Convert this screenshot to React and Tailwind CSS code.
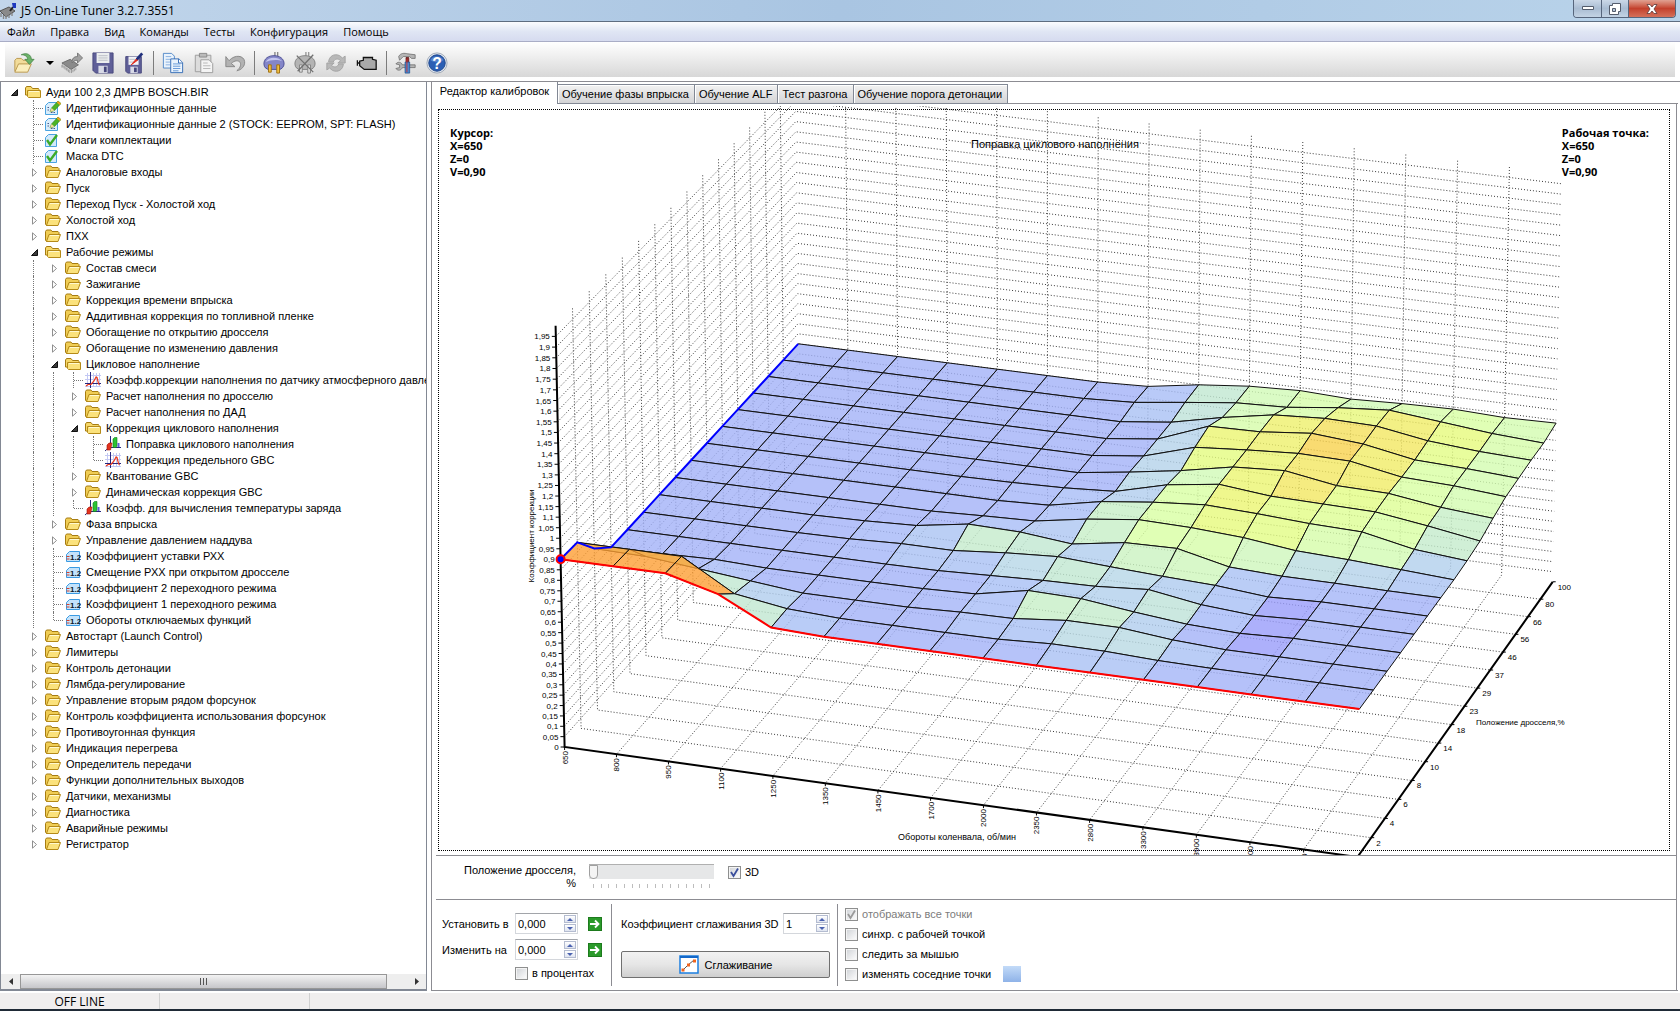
import React, { useState } from 'react';

const MENU = ['Файл', 'Правка', 'Вид', 'Команды', 'Тесты', 'Конфигурация', 'Помощь'];
const TABS = ['Редактор калибровок', 'Обучение фазы впрыска', 'Обучение ALF', 'Тест разгона', 'Обучение порога детонации'];

const TREE = {
    label: 'Ауди 100 2,3 ДМРВ BOSCH.BIR', icon: 'open', children: [
        { label: 'Идентификационные данные', icon: 'edit' },
        { label: 'Идентификационные данные 2 (STOCK: EEPROM, SPT: FLASH)', icon: 'edit' },
        { label: 'Флаги комплектации', icon: 'check' },
        { label: 'Маска DTC', icon: 'check' },
        { label: 'Аналоговые входы', icon: 'folder' },
        { label: 'Пуск', icon: 'folder' },
        { label: 'Переход Пуск - Холостой ход', icon: 'folder' },
        { label: 'Холостой ход', icon: 'folder' },
        { label: 'ПХХ', icon: 'folder' },
        {
            label: 'Рабочие режимы', icon: 'open', children: [
                { label: 'Состав смеси', icon: 'folder' },
                { label: 'Зажигание', icon: 'folder' },
                { label: 'Коррекция времени впрыска', icon: 'folder' },
                { label: 'Аддитивная коррекция по топливной пленке', icon: 'folder' },
                { label: 'Обогащение по открытию дросселя', icon: 'folder' },
                { label: 'Обогащение по изменению давления', icon: 'folder' },
                {
                    label: 'Цикловое наполнение', icon: 'open', children: [
                        { label: 'Коэфф.коррекции наполнения по датчику атмосферного давления', icon: 'curve' },
                        { label: 'Расчет наполнения по дросселю', icon: 'folder' },
                        { label: 'Расчет наполнения по ДАД', icon: 'folder' },
                        {
                            label: 'Коррекция циклового наполнения', icon: 'open', children: [
                                { label: 'Поправка циклового наполнения', icon: 'bars' },
                                { label: 'Коррекция предельного GBC', icon: 'curve' },
                            ],
                        },
                        { label: 'Квантование GBC', icon: 'folder' },
                        { label: 'Динамическая коррекция GBC', icon: 'folder' },
                        { label: 'Коэфф. для вычисления температуры заряда', icon: 'bars' },
                    ],
                },
                { label: 'Фаза впрыска', icon: 'folder' },
                { label: 'Управление давлением наддува', icon: 'folder' },
                { label: 'Коэффициент уставки РХХ', icon: 'value' },
                { label: 'Смещение РХХ при открытом дросселе', icon: 'value' },
                { label: 'Коэффициент 2 переходного режима', icon: 'value' },
                { label: 'Коэффициент 1 переходного режима', icon: 'value' },
                { label: 'Обороты отключаемых функций', icon: 'value' },
            ],
        },
        { label: 'Автостарт (Launch Control)', icon: 'folder' },
        { label: 'Лимитеры', icon: 'folder' },
        { label: 'Контроль детонации', icon: 'folder' },
        { label: 'Лямбда-регулирование', icon: 'folder' },
        { label: 'Управление вторым рядом форсунок', icon: 'folder' },
        { label: 'Контроль коэффициента использования форсунок', icon: 'folder' },
        { label: 'Противоугонная функция', icon: 'folder' },
        { label: 'Индикация перегрева', icon: 'folder' },
        { label: 'Определитель передачи', icon: 'folder' },
        { label: 'Функции дополнительных выходов', icon: 'folder' },
        { label: 'Датчики, механизмы', icon: 'folder' },
        { label: 'Диагностика', icon: 'folder' },
        { label: 'Аварийные режимы', icon: 'folder' },
        { label: 'Регистратор', icon: 'folder' },
    ],
};

/* ---------- Tree icons ---------- */

function NodeIcon({ type }) {
    if (type === 'folder') {
        return (
            <svg width="16" height="16" viewBox="0 0 16 16">
                <path d="M.5 12V3.500l1-1.500H6l1 1.500h6l1 1V7l-2.500 6.500h-10z" fill="#f0cd55" stroke="#a67c12" />
                <path d="M4 6.500h11.500l-2.500 7H1.500z" fill="#fbe27c" stroke="#b58a18" />
                <path d="M5 7.500h9" stroke="#fff9d0" />
            </svg>
        );
    }
    if (type === 'open') {
        return (
            <svg width="16" height="16" viewBox="0 0 16 16">
                <path d="M.5 11V4l1-1.500h4.500l1.500 2h6l.5 1V12z" fill="#f6d768" stroke="#a67c12" />
                <path d="M2.500 6.500h13v7h-12l-1-1z" fill="#fbe27c" stroke="#b58a18" />
                <path d="M4 7.500h10" stroke="#fff9d0" />
            </svg>
        );
    }
    if (type === 'edit') {
        return (
            <svg width="16" height="16" viewBox="0 0 16 16">
                <path d="M3.500 2.500h9v12H.5v-9z" fill="#d8edfc" stroke="#4aa3e0" />
                <path d="M2.500 7.500h2M2.500 10h2M6 12.500h4" stroke="#4a5a8a" strokeDasharray="1.500 1" />
                <path d="M5 12l1.500-4L13 1l3 2.500-6.500 7z" fill="#4bb324" stroke="#2b7d12" strokeWidth=".6" />
                <path d="M5 12l1.500-4 3 2.500z" fill="#f2d79a" />
                <path d="M13 1l3 2.500-1.300 1.400-3-2.500z" fill="#f0a020" />
            </svg>
        );
    }
    if (type === 'check') {
        return (
            <svg width="16" height="16" viewBox="0 0 16 16">
                <path d="M3.500 2.500h8v12H.5v-9z" fill="#d3e9fb" stroke="#4aa3e0" />
                <path d="M2 8l3 4.500L12 3" fill="none" stroke="#3cab28" strokeWidth="2.400" />
            </svg>
        );
    }
    if (type === 'curve') {
        return (
            <svg width="16" height="16" viewBox="0 0 16 16">
                <path d="M0 3.500h16M0 7.500h16M0 14.500h16M2.500 1v14M8.500 1v14M11.500 1v14M14.500 1v14" stroke="#c3c8f4" />
                <path d="M0 11.500h16M5.500 0v16" stroke="#27277d" />
                <path d="M1 14l2-1.500h3L9 9l2-4 1 .5 1.500 6 1 1.500" fill="none" stroke="#ee3a1c" strokeWidth="1.200" />
            </svg>
        );
    }
    if (type === 'bars') {
        return (
            <svg width="16" height="16" viewBox="0 0 16 16">
                <path d="M5.500 0v11M0 15l4-3.500h12" fill="none" stroke="#27277d" />
                <path d="M2 9l2-2h3l-1.500 7H2z" fill="#e2331f" stroke="#a31408" strokeWidth=".6" />
                <path d="M8 3l1.500-1.500H12V10l-1 1.500H8z" fill="#2cc433" stroke="#127a18" strokeWidth=".6" />
                <path d="M12.500 7h2v4h-2z" fill="#5a62d8" />
            </svg>
        );
    }
    return (
        <svg width="16" height="16" viewBox="0 0 16 16">
            <path d="M4.500 3.500h10v10H1.500v-7z" fill="#c4e3fb" stroke="#3b9be2" />
            <path d="M1.500 8.500h3M1.500 11h3" stroke="#d8402c" />
            <text x="5" y="12" fontSize="8" fontWeight="700" fill="#10182a" fontFamily="Liberation Sans, sans-serif">1.2</text>
        </svg>
    );
}

function Expander({ open }) {
    return (
        <button type="button" aria-label={open ? 'Свернуть' : 'Развернуть'} className="flex h-4 w-5 items-center justify-center pl-[2px]">
            <svg width="8" height="9" viewBox="0 0 8 9">
                {open
                    ? <path d="M6.500 1.500v6h-6z" fill="#3a3a3a" stroke="#111" />
                    : <path d="M1.500 .8v7.400l4-3.700z" fill="#fff" stroke="#8f8f8f" />}
            </svg>
        </button>
    );
}

/* guides holds, for every ancestor, whether its vertical dotted line goes on */
function TreeRow({ node, guides, last, root }) {
    const folder = node.icon === 'folder' || node.icon === 'open';
    return (
        <>
            <li className="flex h-4 items-center whitespace-nowrap">
                {guides.map((on, i) => (
                    <span key={i} className="flex h-4 w-5 shrink-0 pl-[9px]">
                        {on && <span className="h-4 border-l border-dotted border-[#777]" />}
                    </span>
                ))}
                {folder ? <Expander open={node.icon === 'open'} /> : (
                    <span className="flex h-4 w-5 shrink-0 items-start pl-[9px]">
                        <span className={`border-l border-dotted border-[#777] ${last ? 'h-2' : 'h-4'}`} />
                        <span className="mt-2 w-[9px] border-t border-dotted border-[#777]" />
                    </span>
                )}
                <span className="mr-[5px] ml-px shrink-0"><NodeIcon type={node.icon} /></span>
                <span>{node.label}</span>
            </li>
            {node.children && node.children.map((child, i) => (
                <TreeRow
                    key={child.label}
                    node={child}
                    guides={root ? [false] : [...guides, !last]}
                    last={i === node.children.length - 1}
                />
            ))}
        </>
    );
}

/* ---------- Toolbar icons ---------- */

const TOOL_ICONS = {
    open: (
        <>
            <path d="M2 21V9l2-2h5l2 2h7v4" fill="#f2dc9a" stroke="#b8954a" />
            <path d="M2 22l4-9h14l-4 9z" fill="#fbeebc" stroke="#b8954a" />
            <path d="M9 3c6-3 11 0 11 5h3l-5 5.500L13 8h3c0-3-3-5-7-5z" fill="#6cb26a" stroke="#3f7f3f" strokeWidth=".8" />
        </>
    ),
    chip: (
        <>
            <path d="M1 12l9-4 9 6-8 5z" fill="#8a8a8a" stroke="#6a6a6a" />
            <path d="M2 13v4M4.500 15v4M7 17v4M9.500 19v4M13 19v3M16 17v3" stroke="#b5b5b5" strokeWidth="1.600" />
            <path d="M1 14v3M3.300 15v3M5.800 17v3M8.300 19v3M11.500 19v4M14.500 18v3" stroke="#777" strokeWidth=".7" />
            <path d="M12 12c0-5 2-7 6-7V1l5.500 5.500L18 12V9c-3 0-4 1-6 3z" fill="#a2a2a2" stroke="#757575" />
        </>
    ),
    save: (
        <>
            <path d="M1 1h22v22H4l-3-3z" fill="#5f5f98" stroke="#46477c" />
            <path d="M5 1h14v11H5z" fill="#eceeef" />
            <path d="M7 4h10M7 6.500h10M7 9h10" stroke="#b9bcc4" />
            <path d="M7 15h10v8H7z" fill="#d8dae6" />
            <path d="M13 16h3v6h-3z" fill="#46477c" />
        </>
    ),
    saveEdit: (
        <>
            <path d="M3 5h17v18H5l-2-2z" fill="#5f5f98" stroke="#46477c" />
            <path d="M6 5h11v9H6z" fill="#f4f5f7" />
            <path d="M7 8h6M7 11h5" stroke="#b9bcc4" />
            <path d="M8 16h8v7H8z" fill="#d8dae6" />
            <path d="M12 17h3v5h-3z" fill="#46477c" />
            <path d="M9 14l6-7 1.500 1.500z" fill="#e02818" stroke="#e02818" />
            <path d="M15 8l6-6.500" stroke="#20307c" strokeWidth="3" />
        </>
    ),
    copy: (
        <>
            <path d="M1.500 1.500h9l3 3v13h-12z" fill="#eaf3fc" stroke="#4f86c6" />
            <path d="M4 5h6M4 8h5M4 11h5M4 14h5" stroke="#85aede" />
            <path d="M9.500 7.500h9l4 4v11h-13z" fill="#eaf3fc" stroke="#2f68b4" />
            <path d="M18 7.500v4.500h4.500" fill="#fff" stroke="#2f68b4" />
            <path d="M12 13h8M12 15.500h8M12 18h8M12 20.500h6" stroke="#5f94d4" />
        </>
    ),
    paste: (
        <>
            <path d="M2.500 3.500h17v18h-17z" fill="#dcdcdc" stroke="#999" />
            <path d="M7 1.500h8v4H7z" fill="#bbb" stroke="#888" />
            <path d="M8.500 8.500h9l4 4v10h-13z" fill="#f4f4f4" stroke="#999" />
            <path d="M11 12h5M11 15h8M11 18h8" stroke="#b4b4b4" />
        </>
    ),
    undo: <path d="M2 5v11h10l-4-3.500c5-5 11-3 10 2-.5 3-2 4-4 6 5-1 9-5 8.500-10C22 4 12 2 5.500 9.500z" fill="#b2b2b2" stroke="#868686" />,
    plug: (
        <>
            <path d="M13 0v6M16 0v6" stroke="#888" strokeWidth="1.500" />
            <path d="M1 13C1 7 6 4 12 4s11 3 11 9c0 3-3 6-5 6H7c-3 0-6-2-6-6z" fill="#8486c8" stroke="#4c4e94" />
            <path d="M3 11c3-6 13-6 18-1-4-2-13-2-18 1z" fill="#c4c6f0" />
            <path d="M6 14v8h3v-8zM15 14v9h3v-9z" fill="#f0c040" stroke="#9c6c10" />
        </>
    ),
    unplug: (
        <>
            <path d="M13 0v6M16 0v6" stroke="#999" strokeWidth="1.500" />
            <path d="M1 13C1 7 6 4 12 4s11 3 11 9c0 3-3 6-5 6H7c-3 0-6-2-6-6z" fill="#b4b4b4" stroke="#808080" />
            <path d="M6 14v8h3v-8zM15 14v9h3v-9z" fill="#ddd" stroke="#808080" />
            <path d="M3 4l18 18M21 3L4 21" stroke="#707070" strokeWidth="1.400" />
        </>
    ),
    refresh: (
        <>
            <path d="M4 11C4 5 10 1 16 4l3 2.500 3-2V12h-8l3-2.500c-3-3-7-2-8 1.500z" fill="#b8b8b8" stroke="#a2a2a2" />
            <path d="M20 13c0 6-6 10-12 7l-3-2.500-3 2V12h8l-3 2.500c3 3 7 2 8-1.500z" fill="#b8b8b8" stroke="#a2a2a2" />
        </>
    ),
    engine: <path d="M4 10l4-1V6h10v2l4 1v10H9l-5-4zM4 12H1.500M1.500 9v6" fill="#a9a9a9" stroke="#111" strokeWidth="1.400" />,
    tools: (
        <>
            <path d="M4 5c2-4 6-4 10-3l8 1v4h-4l-2-2H9L5 9z" fill="#b5b5b5" stroke="#666" strokeWidth=".8" />
            <path d="M12 6h3v6h-3z" fill="#8c2a2a" stroke="#5c1010" strokeWidth=".8" />
            <path d="M1 13l4 1v3l-4 1c2 3 6 2 7-1h14v-3H8c-1-3-5-4-7-1z" fill="#b5b5b5" stroke="#666" strokeWidth=".8" />
            <path d="M11 11h5v12h-5z" fill="#4a86cc" stroke="#1f4e8c" strokeWidth=".8" />
            <path d="M13 8v14" stroke="#d03030" />
        </>
    ),
    help: (
        <>
            <circle cx="12" cy="12" r="11" fill="#e8edf4" stroke="#9aa4b4" />
            <circle cx="12" cy="12" r="9" fill="#2c5fb4" stroke="#1d4488" />
            <path d="M5 9c1-5 12-6 14 0-4 3-10 3-14 0z" fill="#6e9ade" opacity=".6" />
            <text x="12" y="18" fontSize="17" fontWeight="700" fill="#fff" textAnchor="middle" fontFamily="Liberation Sans, sans-serif">?</text>
        </>
    ),
};

const TOOLS = [
    ['open', 'Открыть'], ['drop', 'Последние файлы'], ['chip', 'Прочитать'], ['save', 'Сохранить'], ['saveEdit', 'Сохранить как'], ['sep1'],
    ['copy', 'Копировать'], ['paste', 'Вставить'], ['undo', 'Отменить'], ['sep2'],
    ['plug', 'Соединить'], ['unplug', 'Разъединить'], ['refresh', 'Обновить'], ['engine', 'Двигатель'], ['sep3'],
    ['tools', 'Настройки'], ['help', 'Справка'],
];

function Toolbar() {
    return (
        <div className="h-10 shrink-0 border-b border-[#8c8c92] bg-white px-[5px] pb-1">
            <div className="flex h-[35px] items-center bg-linear-to-b from-white to-[#d8d8d8] pt-[6px] pl-[3px]">
                {TOOLS.map(([id, title]) => {
                    if (id.startsWith('sep')) return <span key={id} className="flex w-2 justify-center"><span className="h-6 w-px bg-[#7c7c7c]" /></span>;
                    if (id === 'drop') {
                        return (
                            <button key={id} type="button" aria-label={title} className="flex w-[17px] justify-center pl-1">
                                <svg width="8" height="4" viewBox="0 0 8 4"><path d="M0 0h8L4 4z" /></svg>
                            </button>
                        );
                    }
                    return (
                        <button key={id} type="button" aria-label={title} className="flex w-[31px] justify-center">
                            <svg width="22" height="22" viewBox="0 0 24 24" fill="none">{TOOL_ICONS[id]}</svg>
                        </button>
                    );
                })}
            </div>
        </div>
    );
}

/* ---------- 3D chart ---------- */

const RPM = ['650', '800', '950', '1100', '1250', '1350', '1450', '1700', '2000', '2350', '2800', '3300', '3900', '4500', '5200'];
const THROTTLE = ['2', '4', '6', '8', '10', '14', '18', '23', '29', '37', '46', '56', '66', '80', '100'];

// rows: throttle 0..100 %, columns: rpm
const VALUES = [
    [0.9, 0.9, 0.9, 0.835, 0.71, 0.7, 0.7, 0.7, 0.7, 0.7, 0.7, 0.7, 0.7, 0.7, 0.7, 0.7],
    [0.895, 0.895, 0.895, 0.75, 0.712, 0.7, 0.7, 0.7, 0.702, 0.714, 0.713, 0.703, 0.7, 0.7, 0.7, 0.7],
    [0.78, 0.775, 0.75, 0.725, 0.7, 0.7, 0.7, 0.71, 0.713, 0.738, 0.738, 0.713, 0.7, 0.7, 0.7, 0.7],
    [0.7, 0.703, 0.709, 0.7, 0.7, 0.7, 0.702, 0.71, 0.76, 0.755, 0.725, 0.7, 0.69, 0.7, 0.7, 0.7],
    [0.7, 0.7, 0.7, 0.7, 0.7, 0.7, 0.702, 0.712, 0.722, 0.727, 0.745, 0.706, 0.688, 0.7, 0.7, 0.7],
    [0.7, 0.7, 0.7, 0.7, 0.703, 0.713, 0.713, 0.735, 0.75, 0.735, 0.722, 0.712, 0.69, 0.7, 0.7, 0.7],
    [0.7, 0.7, 0.7, 0.7, 0.705, 0.715, 0.755, 0.75, 0.725, 0.765, 0.77, 0.714, 0.703, 0.703, 0.7, 0.7],
    [0.7, 0.7, 0.7, 0.7, 0.7, 0.7, 0.71, 0.718, 0.76, 0.79, 0.785, 0.77, 0.74, 0.73, 0.715, 0.7],
    [0.7, 0.7, 0.7, 0.7, 0.7, 0.7, 0.7, 0.71, 0.76, 0.79, 0.81, 0.8, 0.785, 0.778, 0.727, 0.705],
    [0.7, 0.7, 0.7, 0.7, 0.7, 0.7, 0.703, 0.71, 0.725, 0.79, 0.825, 0.8, 0.795, 0.79, 0.755, 0.715],
    [0.7, 0.7, 0.7, 0.7, 0.7, 0.7, 0.7, 0.7, 0.735, 0.775, 0.825, 0.84, 0.8, 0.795, 0.76, 0.74],
    [0.7, 0.7, 0.7, 0.7, 0.7, 0.7, 0.7, 0.7, 0.73, 0.805, 0.825, 0.84, 0.835, 0.79, 0.78, 0.76],
    [0.7, 0.7, 0.7, 0.7, 0.7, 0.7, 0.7, 0.7, 0.73, 0.825, 0.83, 0.855, 0.835, 0.79, 0.78, 0.765],
    [0.7, 0.7, 0.7, 0.7, 0.7, 0.7, 0.7, 0.7, 0.73, 0.785, 0.83, 0.845, 0.84, 0.8, 0.78, 0.77],
    [0.7, 0.7, 0.7, 0.7, 0.7, 0.7, 0.7, 0.713, 0.745, 0.775, 0.785, 0.815, 0.835, 0.81, 0.785, 0.77],
    [0.7, 0.7, 0.7, 0.7, 0.7, 0.7, 0.7, 0.71, 0.75, 0.775, 0.785, 0.775, 0.785, 0.79, 0.78, 0.785],
];

const STOPS = [
    [0.69, 153, 156, 250], [0.7, 163, 178, 248], [0.71, 167, 189, 246], [0.72, 173, 200, 240], [0.735, 183, 215, 231],
    [0.75, 193, 231, 209], [0.775, 209, 250, 183], [0.79, 216, 255, 162], [0.8, 226, 253, 132], [0.825, 235, 245, 113],
    [0.84, 242, 231, 98], [0.855, 248, 210, 78], [0.895, 253, 159, 52],
];

function colorFor(v) {
    if (v <= STOPS[0][0]) return 'rgb(153,156,250)';
    for (let k = 1; k < STOPS.length; k++) {
        const [v1, ...c1] = STOPS[k];
        const [v0, ...c0] = STOPS[k - 1];
        if (v <= v1) {
            const t = (v - v0) / (v1 - v0);
            return `rgb(${c0.map((c, n) => Math.round(c + (c1[n] - c) * t)).join(',')})`;
        }
    }
    return 'rgb(253,159,52)';
}

// perspective: i = rpm index, j = throttle index, val = 0..2
function project(i, j, val) {
    const u = i / 15, v = j / 15, w = val / 2;
    const d = 1 - 0.0201 * u + 0.0583 * v - 0.018 * w;
    const x = (564.6 + 765.6 * u + 281.8 * v - 19 * w) / d;
    const y = (747 + 92.8 * u - 235.8 * v - 427.2 * w) / d;
    return [x - 432, y - 106];
}

const pts = (list) => list.map(([i, j, v]) => project(i, j, v).map((n) => n.toFixed(1)).join(',')).join(' ');
const range = (a, b) => Array.from({ length: b - a + 1 }, (_, k) => a + k);

function Chart() {
    const [mx, my] = project(0, 0, 0.9);
    return (
        <svg className="block h-full w-full" fontFamily="Liberation Sans, Arial, sans-serif">
            {/* walls and floor */}
            <g fill="none" stroke="#3a3a3a" strokeDasharray="1 2">
                {range(1, 39).map((k) => <polyline key={`h${k}`} points={pts([[0, 0, k * 0.05], [0, 15, k * 0.05], [15, 15, k * 0.05]])} />)}
                {range(1, 14).map((j) => <polyline key={`z${j}`} points={pts([[0, j, 2], [0, j, 0], [15, j, 0]])} />)}
                {range(1, 14).map((i) => <polyline key={`x${i}`} points={pts([[i, 15, 2], [i, 15, 0], [i, 0, 0]])} />)}
            </g>
            <text x="623" y="42" textAnchor="middle" fontSize="11">Поправка циклового наполнения</text>

            {/* surface, far rows first */}
            <g stroke="#111" fillOpacity=".8" strokeLinejoin="round">
                {range(0, 14).reverse().map((j) => range(0, 14).map((i) => (
                    <polygon
                        key={`${i}-${j}`}
                        points={pts([[i, j, VALUES[j][i]], [i + 1, j, VALUES[j][i + 1]], [i + 1, j + 1, VALUES[j + 1][i + 1]], [i, j + 1, VALUES[j + 1][i]]])}
                        fill={colorFor(VALUES[j + 1][i])}
                    />
                )))}
            </g>

            {/* axes */}
            <g fill="none" stroke="#000" strokeWidth="2">
                <polyline points={pts([[0, 0, 2], [0, 0, 0], [15, 0, 0], [15, 15, 0]])} />
            </g>
            <g fontSize="8">
                {range(0, 39).map((k) => {
                    const [x, y] = project(0, 0, k * 0.05);
                    return (
                        <g key={k}>
                            <path d={`M${x - 4} ${y}h4`} stroke="#000" />
                            <text x={x - 6} y={y + 3} textAnchor="end">{String(+(k * 0.05).toFixed(2)).replace('.', ',')}</text>
                        </g>
                    );
                })}
                {RPM.map((t, i) => {
                    const [x, y] = project(i, 0, 0);
                    return (
                        <g key={t}>
                            <path d={`M${x} ${y}v3`} stroke="#000" />
                            <text transform={`translate(${x + 3} ${y + 4}) rotate(-90)`} textAnchor="end">{t}</text>
                        </g>
                    );
                })}
                {THROTTLE.map((t, k) => {
                    const [x, y] = project(15, k + 1, 0);
                    return (
                        <g key={t}>
                            <path d={`M${x} ${y}h3`} stroke="#000" />
                            <text x={x + 5} y={y + 8}>{t}</text>
                        </g>
                    );
                })}
                <text x="525" y="734" fontSize="9" textAnchor="middle">Обороты коленвала, об/мин</text>
                <text x="1044" y="619">Положение дросселя,%</text>
                <text transform="translate(102 430) rotate(-90)" textAnchor="middle">Коэффициент коррекции</text>
            </g>

            {/* slices through the cursor */}
            <polyline points={pts(VALUES.map((row, j) => [0, j, row[0]]))} fill="none" stroke="#0000ff" strokeWidth="2" />
            <polyline points={pts(VALUES[0].map((v, i) => [i, 0, v]))} fill="none" stroke="#ff0000" strokeWidth="2" />
            <circle cx={mx} cy={my} r="4" fill="#0000ff" stroke="#ff0000" strokeWidth="2" />
        </svg>
    );
}

function PointInfo({ title, className }) {
    return (
        <div className={`absolute top-5 font-['Open_Sans',sans-serif] text-[11px] leading-[13px] font-bold ${className}`}>
            <p>{title}</p>
            <p>X=650</p>
            <p>Z=0</p>
            <p>V=0,90</p>
        </div>
    );
}

/* ---------- Controls ---------- */

function Check({ label, checked = false, disabled = false }) {
    const [on, setOn] = useState(checked);
    return (
        <label className={`flex items-center gap-1 whitespace-nowrap ${disabled ? 'text-[#7c7c7c]' : ''}`}>
            <span className="relative flex">
                <input
                    type="checkbox"
                    checked={on}
                    disabled={disabled}
                    onChange={() => setOn(!on)}
                    className="size-[13px] appearance-none border border-[#8e8f8f] bg-linear-to-br from-[#cfd2d6] to-white shadow-[inset_0_0_0_1px_#f4f4f4]"
                />
                {on && (
                    <svg className="pointer-events-none absolute inset-0" width="13" height="13" viewBox="0 0 13 13">
                        <path d="M3 6l2.500 4L10 2.500" fill="none" stroke={disabled ? '#9a9a9a' : '#3b4f9c'} strokeWidth="1.800" />
                    </svg>
                )}
            </span>
            <span>{label}</span>
        </label>
    );
}

function Spin({ id, initial, className }) {
    const [value, setValue] = useState(initial);
    const arrow = 'flex h-2 w-3 items-center justify-center border border-[#b4bcd0] bg-linear-to-b from-white to-[#dfe4f0]';
    return (
        <div className={`flex h-[21px] items-start justify-between border border-[#d4d7dc] border-t-[#a2a5aa] bg-white p-px ${className}`}>
            <input id={id} value={value} onChange={(e) => setValue(e.target.value)} className="h-[17px] w-0 flex-1 pl-px text-[11px] leading-4 outline-none" />
            <span className="flex flex-col gap-px">
                <button type="button" aria-label="Больше" className={arrow}><svg width="6" height="3" viewBox="0 0 6 3"><path d="M0 3h6L3 0z" fill="#4b62b0" /></svg></button>
                <button type="button" aria-label="Меньше" className={arrow}><svg width="6" height="3" viewBox="0 0 6 3"><path d="M0 0h6L3 3z" fill="#4b62b0" /></svg></button>
            </span>
        </div>
    );
}

function GoButton({ label }) {
    return (
        <button type="button" aria-label={label} className="ml-[10px] flex size-[14px] items-center justify-center border border-[#1d7a1d] bg-[#2a9a2a]">
            <svg width="10" height="10" viewBox="0 0 10 10"><path d="M0 5h8M5 1.500L8.500 5 5 8.500" fill="none" stroke="#fff" strokeWidth="1.800" /></svg>
        </button>
    );
}

function App() {
    const [throttle, setThrottle] = useState(0);

    return (
        <div className="flex h-screen flex-col overflow-hidden bg-white font-['Liberation_Sans',Arial,sans-serif] text-[11px] leading-4 text-black">
            {/* Title bar */}
            <header className="flex h-[22px] shrink-0 items-start justify-between border-b border-[#5e6d80] bg-linear-to-r from-[#c2d6eb] via-[#a9c5e2] to-[#b9d3ea]">
                <div className="flex items-center gap-1 pt-[2px] font-['Open_Sans',sans-serif] text-[12px] leading-[18px]">
                    <svg width="17" height="17" viewBox="0 0 17 17">
                        <path d="M0 8l9-4 6 4-9 6z" fill="#8a8a8a" stroke="#555" />
                        <path d="M1 10v4M3.500 12v4M6 13v3M9 12v3M12 10v3" stroke="#888" strokeWidth="1.400" />
                        <path d="M10 8l3-4" stroke="#222" strokeWidth="2" />
                        <path d="M12 0h4v5h-3z" fill="#1c38c0" />
                    </svg>
                    <h1>J5 On-Line Tuner 3.2.7.3551</h1>
                </div>
                <div className="mr-1 flex h-[18px] overflow-hidden rounded-b border border-t-0 border-[#56657c]">
                    <button type="button" aria-label="Свернуть окно" className="flex w-7 items-center justify-center border-r border-[#56657c] bg-linear-to-b from-[#cbd8e8] via-[#a9bcd2] to-[#c3d3e4]">
                        <svg width="12" height="5" viewBox="0 0 12 5"><path d="M.5.5h11v3H.5z" fill="#fff" stroke="#545c6c" /></svg>
                    </button>
                    <button type="button" aria-label="Восстановить" className="flex w-[27px] items-center justify-center border-r border-[#56657c] bg-linear-to-b from-[#cbd8e8] via-[#a9bcd2] to-[#c3d3e4]">
                        <svg width="12" height="12" viewBox="0 0 12 12"><path d="M3.500.5h8v8h-2v3h-9v-9h3z" fill="#fff" stroke="#545c6c" /><path d="M3.500 5.500h3v3h-3z" fill="#b8c8da" stroke="#545c6c" /></svg>
                    </button>
                    <button type="button" aria-label="Закрыть" className="flex w-[46px] items-center justify-center bg-linear-to-b from-[#e0a192] via-[#c3402c] to-[#d4705a]">
                        <svg width="12" height="10" viewBox="0 0 12 10"><path d="M1 .5h3l2 2.500 2-2.500h3L8 5l3 4.500H8L6 7 4 9.500H1L4 5z" fill="#fff" stroke="#5c3a3a" strokeWidth=".8" /></svg>
                    </button>
                </div>
            </header>

            {/* Menu */}
            <nav className="flex h-5 shrink-0 items-center gap-[15px] border-b border-[#a9adc6] bg-linear-to-b from-[#fbfcfe] via-[#e0e6f4] to-[#d6dbef] pl-[7px] font-['Open_Sans',sans-serif] text-[11px]">
                {MENU.map((m) => <button key={m} type="button">{m}</button>)}
            </nav>

            <Toolbar />

            <div className="flex min-h-0 flex-1 gap-1">
                {/* Calibration tree */}
                <aside className="flex w-[427px] shrink-0 flex-col border border-t-0 border-b-2 border-[#828894]">
                    <ul className="min-h-0 flex-1 overflow-hidden pt-[2px] pl-[3px]">
                        <TreeRow node={TREE} guides={[]} last root />
                    </ul>
                    <div className="flex h-[15px] shrink-0 items-stretch bg-[#eee]">
                        <button type="button" aria-label="Влево" className="flex w-[19px] items-center justify-center"><svg width="4" height="7" viewBox="0 0 4 7"><path d="M4 0v7L0 3.500z" fill="#333" /></svg></button>
                        <div className="flex flex-1">
                            <div className="flex w-[367px] items-center justify-center gap-[2px] border border-[#979797] bg-linear-to-b from-[#f3f3f3] via-[#dcdcde] to-[#c6c6ca]">
                                <span className="h-[7px] w-px bg-[#555]" />
                                <span className="h-[7px] w-px bg-[#555]" />
                                <span className="h-[7px] w-px bg-[#555]" />
                            </div>
                        </div>
                        <button type="button" aria-label="Вправо" className="flex w-[18px] items-center justify-center"><svg width="4" height="7" viewBox="0 0 4 7"><path d="M0 0v7l4-3.500z" fill="#333" /></svg></button>
                    </div>
                </aside>

                {/* Editor */}
                <main className="mr-[2px] flex min-w-0 flex-1 flex-col border-b border-l border-[#8c8c92]">
                    <div className="flex h-[22px] shrink-0 items-end" role="tablist">
                        {TABS.map((t, i) => (
                            <button
                                key={t}
                                type="button"
                                role="tab"
                                className={i === 0
                                    ? 'h-[22px] w-[126px] border-r border-[#828894] bg-white pb-1 whitespace-nowrap'
                                    : 'h-5 border border-[#828894] border-l-0 bg-linear-to-b from-[#f2f2f2] to-[#d4d4d6] pr-[5px] pl-1 whitespace-nowrap shadow-[inset_1px_1px_0_#fff]'}
                            >
                                {t}
                            </button>
                        ))}
                        <span className="h-px flex-1 bg-[#8c8c92]" />
                    </div>

                    <div className="mr-px flex min-h-0 flex-1 flex-col border-r border-[#8c8c92] pt-[2px]">
                        <section className="relative min-h-0 flex-1 overflow-hidden">
                            <Chart />
                            <div className="pointer-events-none absolute inset-x-[6px] top-[3px] bottom-[4px] border border-dotted border-black" />
                            <PointInfo title="Курсор:" className="left-[18px]" />
                            <PointInfo title="Рабочая точка:" className="right-[27px]" />
                        </section>

                        <section className="ml-1 flex h-11 shrink-0 items-start border-t border-[#8c8c92] pt-2">
                            <label htmlFor="throttle" className="w-[140px] text-right leading-[13px]">Положение дросселя,<br />%</label>
                            <div className="ml-[13px] w-[125px]">
                                <input
                                    id="throttle"
                                    type="range"
                                    min="0"
                                    max="15"
                                    value={throttle}
                                    onChange={(e) => setThrottle(+e.target.value)}
                                    className="block h-[15px] w-full appearance-none border-t border-[#b0b0b0] bg-[#e6e7e8] [&::-webkit-slider-thumb]:h-[14px] [&::-webkit-slider-thumb]:w-[9px] [&::-webkit-slider-thumb]:appearance-none [&::-webkit-slider-thumb]:rounded-b [&::-webkit-slider-thumb]:border [&::-webkit-slider-thumb]:border-[#a0a0a0] [&::-webkit-slider-thumb]:bg-[#f4f4f4]"
                                />
                                <div className="mt-[5px] flex justify-between px-1">
                                    {range(0, 15).map((k) => <span key={k} className="h-1 w-px bg-[#bdbdbd]" />)}
                                </div>
                            </div>
                            <div className="ml-[14px]"><Check label="3D" checked /></div>
                        </section>

                        <section className="ml-1 flex h-[91px] shrink-0 border-t border-[#8c8c92] py-1">
                            <div className="flex w-[176px] flex-col border-r border-[#8c8c92] pt-[9px] pl-[6px]">
                                <div className="flex items-center">
                                    <label htmlFor="set" className="w-[73px] whitespace-nowrap">Установить в</label>
                                    <Spin id="set" initial="0,000" className="w-[63px]" />
                                    <GoButton label="Установить" />
                                </div>
                                <div className="mt-[5px] flex items-center">
                                    <label htmlFor="change" className="w-[73px] whitespace-nowrap">Изменить на</label>
                                    <Spin id="change" initial="0,000" className="w-[63px]" />
                                    <GoButton label="Изменить" />
                                </div>
                                <div className="mt-[5px] pl-[73px]"><Check label="в процентах" /></div>
                            </div>
                            <div className="flex w-[226px] flex-col border-r border-[#8c8c92] pt-[9px] pr-[7px] pl-[9px]">
                                <div className="flex items-center justify-between">
                                    <label htmlFor="smooth" className="whitespace-nowrap">Коэффициент сглаживания 3D</label>
                                    <Spin id="smooth" initial="1" className="w-[47px]" />
                                </div>
                                <button type="button" className="mt-[17px] flex h-[27px] items-center justify-center gap-[6px] rounded-xs border border-[#707070] bg-linear-to-b from-[#f2f2f2] via-[#e6e6e6] to-[#cfcfcf]">
                                    <svg width="20" height="19" viewBox="0 0 20 19">
                                        <path d="M1 1h18v17H1z" fill="#fff" stroke="#1c7fe0" strokeWidth="1.500" />
                                        <path d="M1 2h18" stroke="#1467c8" strokeWidth="2" />
                                        <path d="M4 15l5-5 6-5" stroke="#555" fill="none" />
                                        <path d="M2.500 13.500h3v3h-3zM8 8.500h3v3H8zM14 4.500h3v3h-3z" fill="#f0641e" />
                                    </svg>
                                    Сглаживание
                                </button>
                            </div>
                            <div className="flex flex-col gap-1 pt-[2px] pl-[7px]">
                                <Check label="отображать все точки" checked disabled />
                                <Check label="синхр. с рабочей точкой" />
                                <Check label="следить за мышью" />
                                <div className="flex items-center gap-3">
                                    <Check label="изменять соседние точки" />
                                    <span className="h-4 w-[18px] bg-linear-to-b from-[#c3dbf8] to-[#8fb3e8]" />
                                </div>
                            </div>
                        </section>
                    </div>
                </main>
            </div>

            {/* Status bar */}
            <footer className="mt-[2px] flex h-[18px] shrink-0 border-b-2 border-[#1f2a36] bg-[#f0eeee] font-['Open_Sans',sans-serif] text-[12px] leading-[18px]">
                <span className="w-40 border-r border-[#d0d0d0] text-center">OFF LINE</span>
                <span className="w-[150px] border-r border-[#d0d0d0]" />
            </footer>
        </div>
    );
}

export default App;
